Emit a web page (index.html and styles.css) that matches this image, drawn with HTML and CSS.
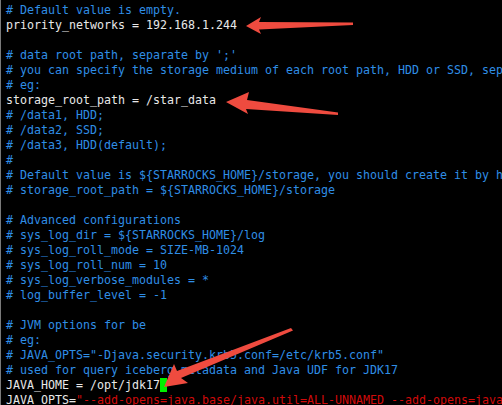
FILE: index.html
```html
<!DOCTYPE html>
<html>
<head>
<meta charset="utf-8">
<link rel="stylesheet" href="styles.css">
</head>
<body>
<div class="term">
<pre class="code"><span class="c"># Default value is empty.</span>
<span class="t">priority_networks = 192.168.1.244</span>

<span class="c"># data root path, separate by ';'</span>
<span class="c"># you can specify the storage medium of each root path, HDD or SSD, sep</span>
<span class="c"># eg:</span>
<span class="t">storage_root_path = /star_data</span>
<span class="c"># /data1, HDD;</span>
<span class="c"># /data2, SSD;</span>
<span class="c"># /data3, HDD(default);</span>
<span class="c">#</span>
<span class="c"># Default value is ${STARROCKS_HOME}/storage, you should create it by h</span>
<span class="c"># storage_root_path = ${STARROCKS_HOME}/storage</span>

<span class="c"># Advanced configurations</span>
<span class="c"># sys_log_dir = ${STARROCKS_HOME}/log</span>
<span class="c"># sys_log_roll_mode = SIZE-MB-1024</span>
<span class="c"># sys_log_roll_num = 10</span>
<span class="c"># sys_log_verbose_modules = *</span>
<span class="c"># log_buffer_level = -1</span>

<span class="c"># JVM options for be</span>
<span class="c"># eg:</span>
<span class="c"># JAVA_OPTS="-Djava.security.krb5.conf=/etc/krb5.conf"</span>
<span class="c"># used for query iceberg metadata and Java UDF for JDK17</span>
<span class="t">JAVA_HOME = /opt/jdk17</span><span class="cursor"> </span>
<span class="t">JAVA_OPTS=</span><span class="s">"--add-opens=java.base/java.util=ALL-UNNAMED --add-opens=java</span></pre>
<svg class="arrows" width="502" height="405" viewBox="0 0 502 405" xmlns="http://www.w3.org/2000/svg">
  <g fill="#ef4b3f">
    <polygon points="246,26 261,17 259,22 353,22.5 353,25 259,29.5 261,34"/>
    <polygon points="226,102 249,92 247,100 338,112.5 338,115 246,109 248,114"/>
    <polygon points="164,387 174,364 177,371 291,328 293,330.5 181,378 188,383"/>
  </g>
</svg>
</div>
</body>
</html>
```
FILE: styles.css
```css
html, body {
  margin: 0;
  padding: 0;
  background: #000;
}
.term {
  position: relative;
  width: 502px;
  height: 405px;
  overflow: hidden;
  background: #000;
  border-left: 1px solid #7a7a7a;
  box-sizing: border-box;
}
.code {
  margin: 0;
  padding: 3px 0 0 5px;
  font-family: "DejaVu Sans Mono", monospace;
  font-size: 11.63px;
  line-height: 15px;
  white-space: pre;
  color: #e8e8e8;
}
.c { color: #2f8ee6; }
.t { color: #e8e8e8; }
.s { color: #d10a0a; }
.cursor {
  background: #00f000;
}
.arrows {
  position: absolute;
  left: -1px;
  top: 0;
}
```
